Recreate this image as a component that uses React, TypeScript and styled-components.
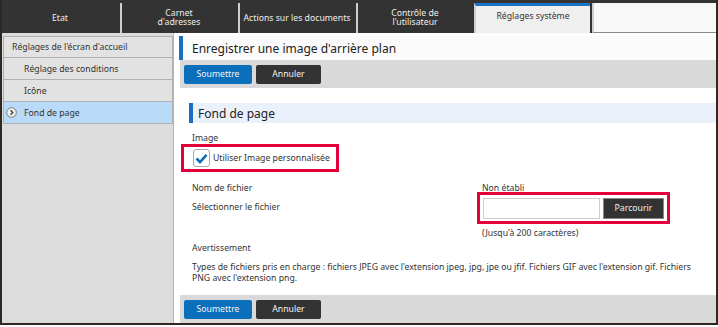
import React from "react";
import styled, { createGlobalStyle } from "styled-components";

const GlobalStyle = createGlobalStyle`
    html, body {
        margin: 0;
        padding: 0;
        background: #ffffff;
    }
    body {
        font-family: "Noto Sans", "Open Sans", sans-serif;
        color: #333;
    }
`;

const Frame = styled.div`
    width: 718px;
    height: 325px;
    box-sizing: border-box;
    border: 2px solid #2e2724;
    border-top: none;
    display: flex;
    flex-direction: column;
    overflow: hidden;
`;

const TabBar = styled.div`
    height: 33px;
    background: #333;
    display: flex;
    padding-top: 3px;
    box-sizing: border-box;
    flex-shrink: 0;
`;

const Tab = styled.div<{ $active?: boolean }>`
    width: 116px;
    margin-right: 2px;
    display: flex;
    align-items: center;
    justify-content: center;
    text-align: center;
    white-space: pre-line;
    font-size: 8.7px;
    line-height: 9px;
    color: ${(p) => (p.$active ? "#333" : "#eee")};
    background: ${(p) => (p.$active ? "#efefef" : "#333")};
    border-left: 2px solid #cfcfcf;
    border-top: ${(p) => (p.$active ? "3px solid #1a73c6" : "none")};
    box-sizing: border-box;
    padding-bottom: ${(p) => (p.$active ? "6px" : "0")};

    &:first-child {
        border-left: none;
    }
`;

const TabFill = styled.div`
    flex: 1;
    background: #f8f8f8;
    border-left: 2px solid #cfcfcf;
    border-bottom: 1px solid #888;
`;

const Body = styled.div`
    flex: 1;
    display: flex;
    min-height: 0;
`;

const Sidebar = styled.div`
    width: 171px;
    background: #dcdcdc;
    border-right: 1px solid #b5b5b5;
    padding-top: 3px;
    display: flex;
    flex-direction: column;
    flex-shrink: 0;
`;

const NavItem = styled.div<{ $level: number; $selected?: boolean }>`
    height: 22px;
    display: flex;
    align-items: center;
    position: relative;
    padding-left: ${(p) => (p.$level === 0 ? 8 : 20)}px;
    font-size: 8.7px;
    color: #333;
    background: ${(p) => (p.$selected ? "#b9dbf9" : "#e2e2e2")};
    border: 1px solid #b0b0b0;
    border-top: none;
    margin-left: 1px;
    box-sizing: border-box;

    &:first-child {
        border-top: 1px solid #b0b0b0;
    }
`;

const NavIcon = styled.svg`
    position: absolute;
    left: 2px;
    top: 5px;
`;

const Content = styled.div`
    flex: 1;
    background: #fff;
    padding: 3px 0 0 5px;
    display: flex;
    flex-direction: column;
`;

const PageTitle = styled.div`
    height: 26px;
    display: flex;
    align-items: center;
    background: #fbfbfb;
    border-left: 4px solid #1a6fbf;
    padding-left: 9px;
    font-size: 12px;
    color: #222;
`;

const ButtonBar = styled.div`
    height: 28px;
    background: #d9d9d9;
    display: flex;
    align-items: center;
    gap: 4px;
    padding-left: 4px;
    margin-left: 1px;
    flex-shrink: 0;
`;

const Button = styled.button<{ $primary?: boolean }>`
    height: 19px;
    width: ${(p) => (p.$primary ? 68 : 65)}px;
    border: none;
    border-radius: 2px;
    font-family: inherit;
    font-size: 8.7px;
    color: #f2f2f2;
    background: ${(p) => (p.$primary ? "#0b6fbc" : "#333")};
    padding: 0;
`;

const Section = styled.div`
    padding: 15px 0 0 10px;
    display: flex;
    flex-direction: column;
`;

const SectionTitle = styled.div`
    height: 20px;
    display: flex;
    align-items: center;
    background: #eaf1fb;
    border-left: 4px solid #1a6fbf;
    padding-left: 5px;
    font-size: 12px;
    color: #222;
`;

const Label = styled.div<{ $indent?: number; $top?: number }>`
    font-size: 8.7px;
    line-height: 12px;
    color: #333;
    padding-left: ${(p) => p.$indent ?? 0}px;
    padding-top: ${(p) => p.$top ?? 0}px;
`;

const FieldRow = styled.div<{ $pull?: number }>`
    display: grid;
    grid-template-columns: 290px 1fr;
    padding-left: 4px;
    margin-top: ${(p) => -(p.$pull ?? 0)}px;
`;

const Highlight = styled.div<{ $w: number; $h: number; $pad: number }>`
    width: ${(p) => p.$w}px;
    height: ${(p) => p.$h}px;
    padding-left: ${(p) => p.$pad}px;
    border: 3px solid #e4003b;
    box-sizing: border-box;
    display: flex;
    align-items: center;
`;

const CheckRow = styled.div`
    display: flex;
    padding-left: 2px;
`;

const CheckBox = styled.span`
    width: 15px;
    height: 16px;
    border: 1px solid #aaa;
    border-radius: 3px;
    background: #fff;
    display: inline-flex;
    align-items: center;
    justify-content: center;
    margin-right: 3px;
`;

const FileCell = styled.div`
    padding-left: 4px;
`;

const FileInput = styled.div`
    width: 117px;
    height: 21px;
    border: 1px solid #ccc;
    box-sizing: border-box;
    background: #fff;
`;

const BrowseButton = styled.button`
    width: 61px;
    height: 21px;
    margin-left: 3px;
    border: 1px solid #888;
    background: #333;
    color: #eee;
    font-family: inherit;
    font-size: 8.7px;
    padding: 0;
`;

const Note = styled.div`
    font-size: 8.7px;
    line-height: 11px;
    color: #333;
    padding: 0 20px 0 13px;
`;

const Spacer = styled.div<{ $h: number }>`
    height: ${(p) => p.$h}px;
    flex-shrink: 0;
`;

const tabs = [
    "Etat",
    "Carnet\nd'adresses",
    "Actions sur les documents",
    "Contrôle de\nl'utilisateur",
];

const navItems = [
    { label: "Réglages de l'écran d'accueil", level: 0 },
    { label: "Réglage des conditions", level: 1 },
    { label: "Icône", level: 1 },
    { label: "Fond de page", level: 1, selected: true },
];

const App = () => {
    return (
        <>
            <GlobalStyle />
            <Frame>
                <TabBar>
                    {tabs.map((t) => (
                        <Tab key={t}>{t}</Tab>
                    ))}
                    <Tab $active>Réglages système</Tab>
                    <TabFill />
                </TabBar>
                <Body>
                    <Sidebar>
                        {navItems.map((n) => (
                            <NavItem key={n.label} $level={n.level} $selected={n.selected}>
                                {n.selected && (
                                    <NavIcon width="11" height="11" viewBox="0 0 11 11">
                                        <circle cx="5.5" cy="5.5" r="4.8" fill="#f4f4f4" stroke="#777" strokeWidth="1" />
                                        <path d="M4.5 3.2 L6.8 5.5 L4.5 7.8" fill="none" stroke="#444" strokeWidth="1.4" />
                                    </NavIcon>
                                )}
                                {n.label}
                            </NavItem>
                        ))}
                    </Sidebar>
                    <Content>
                        <PageTitle>Enregistrer une image d'arrière plan</PageTitle>
                        <ButtonBar>
                            <Button $primary>Soumettre</Button>
                            <Button>Annuler</Button>
                        </ButtonBar>
                        <Section>
                            <SectionTitle>Fond de page</SectionTitle>
                        </Section>
                        <Spacer $h={9} />
                        <FieldRow>
                            <Label $indent={9}>Image</Label>
                        </FieldRow>
                        <CheckRow>
                            <Highlight $w={158} $h={28} $pad={9}>
                                <CheckBox>
                                    <svg width="13" height="11" viewBox="0 0 13 11">
                                        <path d="M1.5 5.5 L5 9 L11.5 1.8" fill="none" stroke="#0b6fbc" strokeWidth="2.6" />
                                    </svg>
                                </CheckBox>
                                <Label>Utiliser Image personnalisée</Label>
                            </Highlight>
                        </CheckRow>
                        <Spacer $h={10} />
                        <FieldRow>
                            <Label $indent={9}>Nom de fichier</Label>
                            <Label $indent={9}>Non établi</Label>
                        </FieldRow>
                        <FieldRow $pull={2}>
                            <Label $indent={9} $top={9}>Sélectionner le fichier</Label>
                            <FileCell>
                                <Highlight $w={193} $h={32} $pad={3}>
                                    <FileInput />
                                    <BrowseButton>Parcourir</BrowseButton>
                                </Highlight>
                            </FileCell>
                        </FieldRow>
                        <FieldRow>
                            <span />
                            <Label $indent={9} $top={3}>(Jusqu'à 200 caractères)</Label>
                        </FieldRow>
                        <Spacer $h={3} />
                        <Label $indent={13}>Avertissement</Label>
                        <Spacer $h={8} />
                        <Note>
                            Types de fichiers pris en charge : fichiers JPEG avec l'extension jpeg, jpg, jpe ou jfif. Fichiers GIF avec l'extension gif. Fichiers PNG avec l'extension png.
                        </Note>
                        <Spacer $h={11} />
                        <ButtonBar>
                            <Button $primary>Soumettre</Button>
                            <Button>Annuler</Button>
                        </ButtonBar>
                    </Content>
                </Body>
            </Frame>
        </>
    );
};

export default App;
